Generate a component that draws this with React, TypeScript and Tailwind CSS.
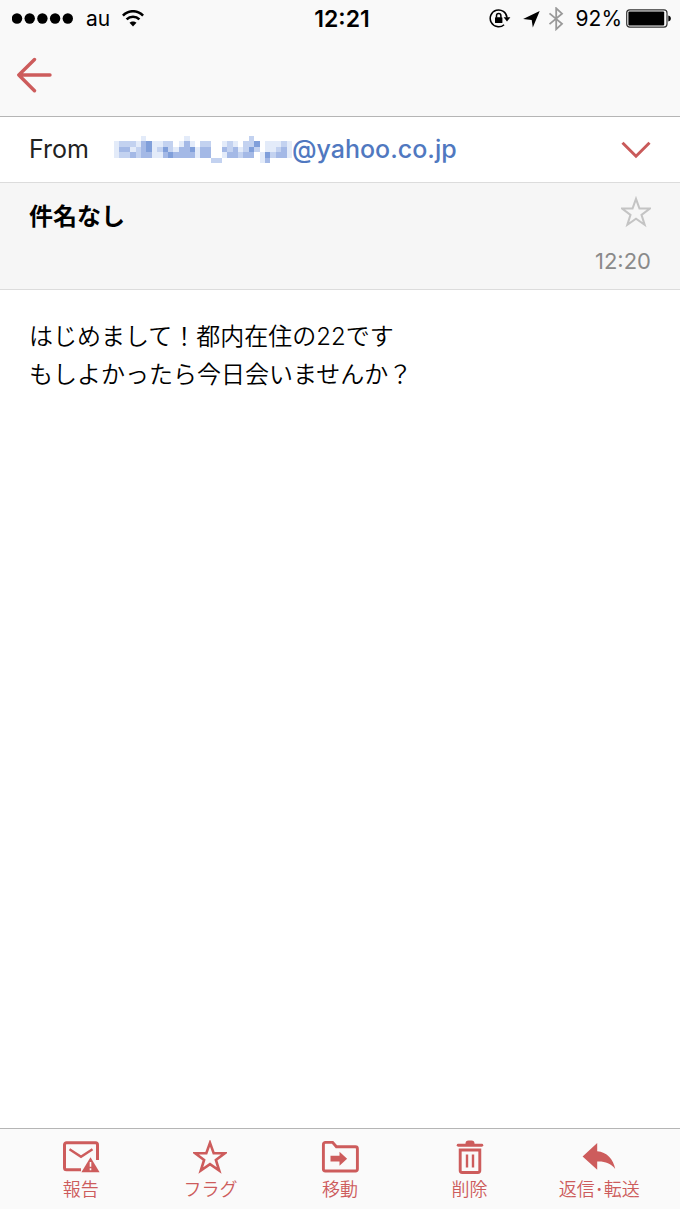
import React from 'react';

const FONT = "font-['Inter','Noto_Sans_CJK_JP',sans-serif]";

// one digit per block, higher is darker
const MOSAIC = [
  '000001000000010000000000020000000',
  '122213411220131022001210224011121',
  '133123412421334133003231242011231',
  '122323311343333133001332330142331',
  '000000000000000000220000000130000',
];
const SHADES = ['none', '#e3ebf9', '#c3d2f0', '#a4b9e6', '#809fda'];

const MaskedName = () => (
  <svg width="178" height="27" viewBox="0 0 33 5" preserveAspectRatio="none" shapeRendering="crispEdges" aria-hidden="true">
    {MOSAIC.map((row, y) =>
      row.split('').map((level, x) => (
        <rect key={`${x}-${y}`} x={x} y={y} width="1" height="1" fill={SHADES[Number(level)]} />
      ))
    )}
  </svg>
);

const StatusBar = () => (
  <div className="grid grid-cols-[1fr_auto_1fr] items-center h-[38px] pl-3 pr-2 text-black">
    <div className="flex items-center">
      <svg width="62" height="12" viewBox="0 0 62 12" fill="currentColor" aria-hidden="true">
        {[5, 17.7, 30.4, 43.1, 55.8].map((cx) => (
          <circle key={cx} cx={cx} cy="5.5" r="5.2" />
        ))}
      </svg>
      <span className="ml-3 text-[21px] leading-6">au</span>
      <svg className="ml-3" width="22" height="18" viewBox="0 0 22 18" fill="none" stroke="currentColor" strokeWidth="2.6" aria-hidden="true">
        <path d="M.9 5.6C6.6-.2 15.4-.2 21.1 5.6" />
        <path d="M4.6 9.4c3.6-3.6 9.2-3.6 12.8 0" />
        <path d="M11 16.4l-3.5-3.6c2-1.9 5-1.9 7 0z" fill="currentColor" stroke="none" />
      </svg>
    </div>
    <span className="text-[23px] leading-6 font-semibold">12:21</span>
    <div className="flex items-center justify-end">
      <svg width="22" height="20" viewBox="0 0 22 20" fill="none" stroke="currentColor" strokeWidth="1.5" aria-hidden="true">
        <path d="M15.1 15.7A8.4 8.4 0 1 1 18 8.7" />
        <path d="M14.6 8.3h6.8L18 12.4z" fill="currentColor" stroke="none" />
        <rect x="6" y="8.3" width="7.4" height="5.8" rx=".6" fill="currentColor" stroke="none" />
        <path d="M7.5 8.7V6.8a2.2 2.2 0 0 1 4.4 0v1.9" />
      </svg>
      <svg className="ml-3" width="17" height="17" viewBox="0 0 17 17" fill="currentColor" aria-hidden="true">
        <path d="M16.7 0L9.8 16.400 8.700 9.100.1 7.900z" />
      </svg>
      <svg className="ml-2 text-[#999]" width="16" height="24" viewBox="0 0 16 24" fill="none" stroke="currentColor" strokeWidth="1.8" aria-hidden="true">
        <path d="M1.500 6.400l12.500 10.400-5.800 5.400V1.300l5.800 5.400-12.500 10.400" />
      </svg>
      <span className="ml-3 text-[21px] leading-6">92%</span>
      <svg className="ml-1" width="46" height="20" viewBox="0 0 46 20" aria-hidden="true">
        <rect x=".7" y=".9" width="40.300" height="17.200" rx="3" fill="none" stroke="#333" strokeWidth="1.200" />
        <rect x="2.400" y="2.600" width="35.800" height="13.800" rx="1" fill="#000" />
        <path d="M42.300 6.500c3.400.5 3.400 5.500 0 6z" fill="#000" />
      </svg>
    </div>
  </div>
);

const STAR = 'M17 2.900L20.700 13.300H31.800L22.900 20L26.200 30.600L17 24.200L7.800 30.600L11.100 20L2.200 13.300H13.300Z';

const actions = [
  {
    label: '報告',
    icon: (
      <svg width="38" height="34" viewBox="0 0 38 34" fill="none" stroke="currentColor" strokeWidth="3" aria-hidden="true">
        <path d="M19 29.700H4.500a2 2 0 0 1-2-2V4.800a2 2 0 0 1 2-2h29a2 2 0 0 1 2 2V20" />
        <path d="M7.500 9.200L19 16.800l11.500-7.600" strokeWidth="2.500" />
        <path d="M28.500 17.200L37.600 32.200H19.400z" fill="currentColor" stroke="none" />
        <path d="M28.500 22v4.800M28.500 28.200v2" stroke="#fafafa" strokeWidth="1.600" />
      </svg>
    ),
  },
  {
    label: 'フラグ',
    icon: (
      <svg width="34" height="34" viewBox="0 0 34 34" fill="none" stroke="currentColor" strokeWidth="2.600" aria-hidden="true">
        <path d={STAR} />
      </svg>
    ),
  },
  {
    label: '移動',
    icon: (
      <svg width="38" height="34" viewBox="0 0 38 34" fill="none" stroke="currentColor" strokeWidth="2.900" aria-hidden="true">
        <path d="M2.400 29V4.400a2 2 0 0 1 2-2h7.200l3.800 4.400H34.400a2 2 0 0 1 2 2V29a2 2 0 0 1-2 2H4.400a2 2 0 0 1-2-2z" />
        <path d="M9.500 15.800h9v-4.100l7.600 7-7.600 7v-4.100H9.500z" fill="currentColor" stroke="none" />
      </svg>
    ),
  },
  {
    label: '削除',
    icon: (
      <svg width="30" height="36" viewBox="0 0 30 36" fill="none" stroke="currentColor" strokeWidth="2.900" aria-hidden="true">
        <path d="M3.200 6.200h23.600" strokeLinecap="round" />
        <path d="M10.500 6V4.500a3 3 0 0 1 3-3h3a3 3 0 0 1 3 3V6z" fill="currentColor" stroke="none" />
        <path d="M5.200 11h19.600v20.500a2 2 0 0 1-2 2H7.200a2 2 0 0 1-2-2z" />
        <path d="M12 15.500v13M18 15.500v13" strokeWidth="2.400" />
      </svg>
    ),
  },
  {
    label: '返信･転送',
    icon: (
      <svg width="34" height="30" viewBox="0 0 34 30" fill="currentColor" aria-hidden="true">
        <path d="M15.200 1v8.300c9.500.5 16.300 8.200 18 17.600-4.600-5.600-10.600-7.700-18-7.300v8.200L.6 14.500z" />
      </svg>
    ),
  },
];

const App: React.FC = () => {
  return (
    <div className={`flex flex-col min-h-screen bg-white text-black ${FONT}`}>
      <header className="border-b border-[#b5b5b5] bg-[#f9f9f9]">
        <StatusBar />
        <nav className="flex items-center h-[78px] px-4 pb-1">
          <button type="button" aria-label="戻る" className="text-[#cd5c5c]">
            <svg width="36" height="36" viewBox="0 0 36 36" fill="none" stroke="currentColor" strokeWidth="3.400" strokeLinecap="round" strokeLinejoin="round">
              <path d="M18.500 2.500L2.800 18l15.700 15.700M2.800 18H34" />
            </svg>
          </button>
        </nav>
      </header>

      <section className="flex items-center h-[66px] px-[29px] border-b border-[#dcdcdc]">
        <span className="w-[85px] text-[25px] text-[#222]">From</span>
        <a href="#sender" className="flex items-center text-[25px] font-medium text-[#5078c0]">
          <MaskedName />
          @yahoo.co.jp
        </a>
        <button type="button" aria-label="詳細" className="ml-auto text-[#c95a5a]">
          <svg width="30" height="20" viewBox="0 0 30 20" fill="none" stroke="currentColor" strokeWidth="3">
            <path d="M1.500 2.800l13.500 13.400L28.500 2.800" />
          </svg>
        </button>
      </section>

      <section className="flex justify-between px-[29px] py-3 h-[107px] border-b border-[#dcdcdc] bg-[#f6f6f6]">
        <h1 className="text-2xl leading-[44px] font-bold">件名なし</h1>
        <div className="flex flex-col items-end justify-between">
          <button type="button" aria-label="フラグを付ける" className="text-[#c4c4c4]">
            <svg width="30" height="34" viewBox="1 0 32 34" fill="none" stroke="currentColor" strokeWidth="2.200">
              <path d={STAR} />
            </svg>
          </button>
          <time className="text-[22px] leading-8 text-[#8a8a8a]">12:20</time>
        </div>
      </section>

      <main className="flex-1 px-[29px] py-7 text-2xl leading-[38px] font-[350]">
        <p>はじめまして！都内在住の22です</p>
        <p>もしよかったら今日会いませんか？</p>
      </main>

      <footer className="grid grid-cols-5 h-[81px] px-4 border-t border-[#b5b5b5] bg-[#fafafa]">
        {actions.map(({ label, icon }) => (
          <button key={label} type="button" className="flex flex-col items-center pt-2 text-lg leading-[26px] font-[350] text-[#cd5c5c]">
            <span className="flex items-center justify-center h-10">{icon}</span>
            {label}
          </button>
        ))}
      </footer>
    </div>
  );
};

export default App;
